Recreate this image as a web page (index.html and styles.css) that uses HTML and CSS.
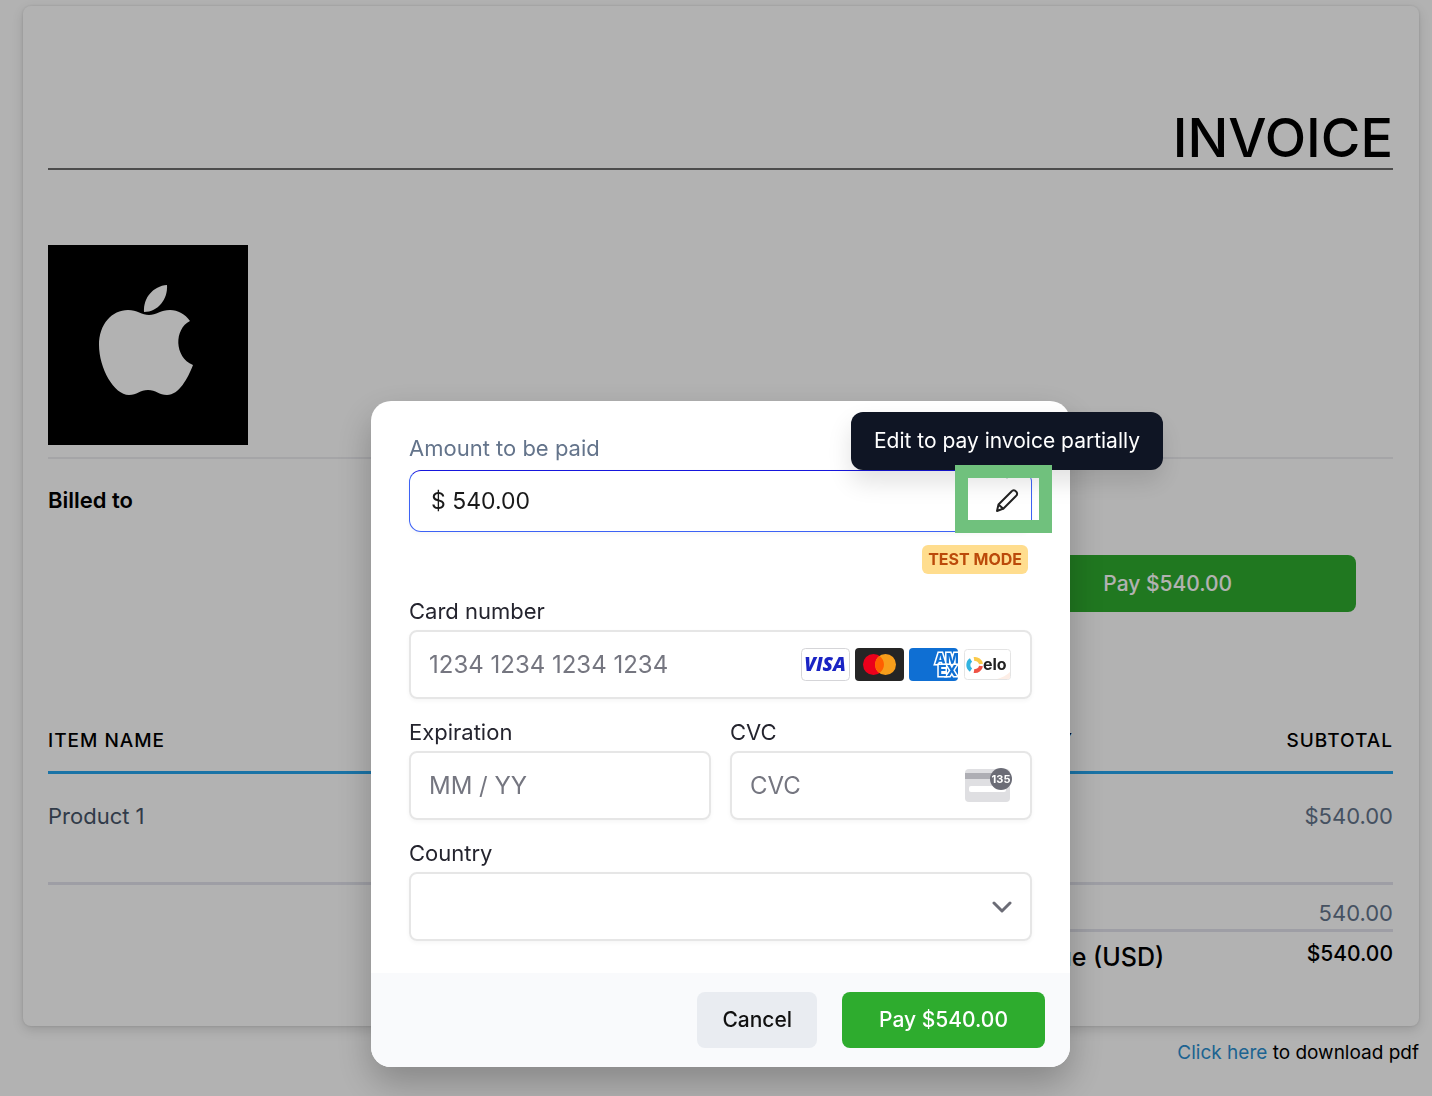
FILE: index.html
```html
<!DOCTYPE html>
<html lang="en">
<head>
  <meta charset="UTF-8">
  <meta name="viewport" content="width=device-width, initial-scale=1.0">
  <title>Invoice</title>
  <link rel="stylesheet" href="styles.css">
</head>
<body>
<div class="page">
  <main class="invoice">
    <h1 class="invoice-title">INVOICE</h1>
    <div class="company">
      <svg class="logo" viewBox="0 0 200 200" role="img" aria-label="Company logo">
        <rect width="200" height="200" fill="#000"/>
        <path fill="#fff" d="M96 67c-1-14 9-26 23-27 1 14-9 27-23 27z"/>
        <path fill="#fff" d="M51 100c0-21 13-35 29-35 9 0 14 5 21 5s12-5 21-5c8 0 15 4 20 11-16 8-16 36 3 44-5 13-14 30-26 30-8 0-11-5-19-5s-11 5-19 5c-15 0-30-27-30-50z"/>
      </svg>
    </div>
    <h2 class="billed">Billed to</h2>
    <button class="btn btn-pay btn-invoice">Pay $540.00</button>
    <table class="items">
      <thead>
        <tr><th class="col-item">ITEM NAME</th><th class="col-qty">QTY</th><th>SUBTOTAL</th></tr>
      </thead>
      <tbody>
        <tr><td class="item-name">Product 1</td><td></td><td>$540.00</td></tr>
      </tbody>
      <tfoot>
        <tr class="sum"><td></td><td></td><td>540.00</td></tr>
        <tr class="due"><td></td><td class="due-label">Amount Due (USD)</td><td>$540.00</td></tr>
      </tfoot>
    </table>
  </main>
  <p class="download"><a href="#">Click here</a> to download pdf</p>
</div>

<div class="overlay">
  <form class="modal" role="dialog" aria-label="Pay invoice">
    <div class="modal-body">
      <label class="amount-label" for="amount">Amount to be paid</label>
      <div class="field amount">
        <input id="amount" type="text" value="$ 540.00">
        <button type="button" class="edit" aria-label="Edit amount">
          <svg viewBox="0 0 24 24" width="24" height="24" fill="none" stroke="#222" stroke-width="2" stroke-linejoin="round" stroke-linecap="round">
            <path d="M2 22l1.500-6.500L16.500 2.500a2.800 2.800 0 0 1 4.500 0a2.800 2.800 0 0 1 0 4.500L8.500 19.500z"/>
            <path d="M4 16l4 3.500"/>
          </svg>
        </button>
        <span class="tooltip" role="tooltip">Edit to pay invoice partially</span>
        <span class="highlight"></span>
      </div>
      <span class="badge">TEST MODE</span>

      <div class="card-form">
        <div class="group wide">
          <label for="card">Card number</label>
          <div class="field">
            <input id="card" type="text" placeholder="1234 1234 1234 1234">
            <div class="brands">
              <svg width="49" height="33" viewBox="0 0 49 33">
                <rect x="0.500" y="0.500" width="48" height="32" rx="4" fill="#fff" stroke="#d5d5d8"/>
                <text x="24" y="23" text-anchor="middle" font-family="Open Sans, sans-serif" font-size="19" font-weight="800" font-style="italic" fill="#1a24c4">VISA</text>
              </svg>
              <svg width="49" height="33" viewBox="0 0 49 33">
                <rect width="49" height="33" rx="4" fill="#252525"/>
                <circle cx="18.500" cy="16.500" r="10.500" fill="#eb001b"/>
                <circle cx="30.500" cy="16.500" r="10.500" fill="#f79e1b"/>
                <path fill="#ff5f00" d="M24.500 7.900a10.500 10.500 0 0 1 0 17.200a10.500 10.500 0 0 1 0-17.200z"/>
              </svg>
              <svg width="49" height="33" viewBox="0 0 49 33">
                <rect width="49" height="33" rx="4" fill="#0f6fd3"/>
                <g font-family="Inter, sans-serif" font-size="14" font-weight="800" fill="#0f6fd3" stroke="#fff" stroke-width="3" paint-order="stroke">
                  <text x="26" y="16">AM</text>
                  <text x="29" y="28">EX</text>
                </g>
              </svg>
              <svg width="49" height="33" viewBox="0 0 49 33">
                <rect x="1.500" y="1.500" width="46" height="30" rx="3" fill="#fff" stroke="#e4e4e4"/>
                <path d="M34 31q8-2 13-7v5q0 2-2 2z" fill="#fdeee6"/>
                <g fill="none" stroke-width="4">
                  <path d="M8 22a6 6 0 0 1 0-10" stroke="#32b4e0"/>
                  <path d="M11 11a6 6 0 0 1 7 5" stroke="#fbca4a"/>
                  <path d="M18 18a6 6 0 0 1-7 5" stroke="#ef5245"/>
                </g>
                <text x="20" y="22" font-family="Inter, sans-serif" font-size="16" font-weight="700" fill="#222">elo</text>
              </svg>
            </div>
          </div>
        </div>
        <div class="group">
          <label for="exp">Expiration</label>
          <div class="field"><input id="exp" type="text" placeholder="MM / YY"></div>
        </div>
        <div class="group">
          <label for="cvc">CVC</label>
          <div class="field">
            <input id="cvc" type="text" placeholder="CVC">
            <svg width="47" height="36" viewBox="0 0 47 36">
              <rect y="1" width="45" height="33" rx="4" fill="#dfdfe2"/>
              <path d="M0 5h45v6H0z" fill="#aeaeb4"/>
              <rect x="4" y="18" width="37" height="6" rx="2" fill="#fff"/>
              <circle cx="36" cy="11" r="11" fill="#6b6c76"/>
              <text x="36" y="15" text-anchor="middle" font-family="Inter, sans-serif" font-size="11" font-weight="700" fill="#fff">135</text>
            </svg>
          </div>
        </div>
        <div class="group wide">
          <label for="country">Country</label>
          <div class="field select">
            <select id="country"><option value=""></option></select>
            <svg class="chevron" width="20" height="12" viewBox="0 0 20 12" fill="none" stroke="#6b6c76" stroke-width="3" stroke-linecap="round" stroke-linejoin="round"><path d="M2 2l8 8 8-8"/></svg>
          </div>
        </div>
      </div>
    </div>
    <div class="modal-footer">
      <button type="button" class="btn btn-cancel">Cancel</button>
      <button type="button" class="btn btn-pay">Pay $540.00</button>
    </div>
  </form>
</div>
</body>
</html>
```
FILE: styles.css
```css
* {
  box-sizing: border-box;
}
body {
  margin: 0;
  background: #fff;
  color: #000;
  font-family: Inter, "Liberation Sans", sans-serif;
  font-size: 22px;
  line-height: 28px;
}
input, select, button {
  font: inherit;
  color: inherit;
}
.page {
  padding: 6px 13px 0 23px;
}

/* Invoice */
.invoice {
  padding: 0 26px 52px 25px;
  border-radius: 8px;
  box-shadow: 0 0 2px 1px rgba(0,0,0,0.06), 0 4px 12px rgba(0,0,0,0.14);
}
.invoice-title {
  margin: 0;
  padding-top: 102px;
  border-bottom: 2px solid #6e6e6e;
  font-size: 54px;
  font-weight: 500;
  line-height: 60px;
  text-align: right;
}
.company {
  padding: 75px 0 12px;
  border-bottom: 2px solid #ececf0;
}
.logo {
  display: block;
  width: 200px;
  height: 200px;
}
.billed {
  margin: 27px 0 41px;
  font-size: 22px;
  font-weight: 600;
}
.btn {
  height: 56px;
  border: none;
  border-radius: 8px;
  font-size: 21px;
  font-weight: 500;
  cursor: pointer;
}
.btn-pay {
  background: #2eac2e;
  color: #fff;
  padding: 0 37px;
}
.btn-invoice {
  display: block;
  width: 28%;
  height: 57px;
  margin: 0 37px 88px auto;
}
.items {
  width: 100%;
  table-layout: fixed;
  border-collapse: separate;
  border-spacing: 0;
}
.items th {
  padding: 29px 0 18px;
  border-bottom: 3px solid #26a5ee;
  font-size: 19px;
  font-weight: 500;
  line-height: 24px;
  letter-spacing: 1px;
  text-align: right;
}
.items .col-item {
  width: 66.2%;
  text-align: left;
}
.items .col-qty {
  width: 10%;
}
.items td {
  padding: 0;
  vertical-align: top;
  text-align: right;
  color: #64748b;
}
.items tbody td {
  padding: 28px 0 52px;
  border-bottom: 3px solid #e2e3ec;
}
.items .item-name {
  text-align: left;
  color: #475569;
}
.sum td {
  padding: 14px 0 2px;
}
.sum td + td {
  border-bottom: 3px solid #e2e3ec;
}
.items .due td {
  padding-top: 8px;
  color: #000;
  font-size: 21px;
  font-weight: 500;
}
.items .due .due-label {
  font-size: 25px;
  line-height: 34px;
  text-align: left;
  white-space: nowrap;
}
.download {
  margin: 13px 0 0;
  text-align: right;
  font-size: 19px;
}
.download a {
  color: #2b8fd0;
  text-decoration: none;
}

/* Payment modal */
.overlay {
  position: fixed;
  inset: 0;
  display: flex;
  align-items: flex-end;
  justify-content: center;
  padding: 0 0 29px 9px;
  background: rgba(0,0,0,0.3);
}
.modal {
  width: 699px;
  max-width: 100%;
  border-radius: 20px;
  background: #fff;
  box-shadow: 0 16px 36px rgba(0,0,0,0.25);
}
.modal-body {
  display: flex;
  flex-direction: column;
  padding: 33px 38px 32px;
}
.amount-label {
  margin-bottom: 8px;
  color: #64748b;
}
.field {
  display: flex;
  align-items: center;
  height: 69px;
  padding: 0 18px;
  border: 2px solid #e6e6e6;
  border-radius: 8px;
  box-shadow: 0 2px 4px rgba(0,0,0,0.04);
}
.field input,
.field select {
  flex: 1;
  min-width: 0;
  padding: 0;
  border: none;
  outline: none;
  background: none;
  font-size: 24px;
}
.field input::placeholder {
  color: #757680;
}
.amount {
  position: relative;
  height: 62px;
  padding: 0 12px 0 21px;
  border: 1px solid #3d62f5;
  border-top-color: #1616dd;
  border-radius: 12px;
}
.amount input {
  font-size: 23px;
  color: #1a1a1a;
}
.edit {
  display: flex;
  padding: 0;
  border: none;
  background: none;
  cursor: pointer;
}
.tooltip {
  position: absolute;
  right: -132px;
  bottom: 61px;
  padding: 15px 23px;
  border-radius: 12px;
  background: #0f1524;
  color: #fff;
  box-shadow: 0 12px 24px rgba(0,0,0,0.12);
  font-size: 21px;
  white-space: nowrap;
}
.tooltip::after {
  content: "";
  position: absolute;
  left: 50%;
  bottom: -6px;
  width: 12px;
  height: 12px;
  margin-left: -6px;
  background: #0f1524;
  transform: rotate(45deg);
}
.highlight {
  position: absolute;
  top: -6px;
  right: -21px;
  width: 97px;
  height: 68px;
  border: 13px solid #70c17d;
}
.badge {
  align-self: flex-end;
  margin: 13px 4px 23px 0;
  padding: 0 6px;
  border-radius: 6px;
  background: #ffdd8e;
  color: #bb4a0a;
  font-size: 16px;
  font-weight: 700;
  line-height: 29px;
}
.card-form {
  display: grid;
  grid-template-columns: repeat(2, minmax(0, 1fr));
  gap: 19px;
  color: #24242e;
}
.group {
  display: flex;
  flex-direction: column;
  gap: 5px;
}
.wide {
  grid-column: 1 / -1;
}
.brands {
  display: flex;
  gap: 5px;
}
.select {
  position: relative;
}
.field select {
  align-self: stretch;
  appearance: none;
}
.chevron {
  position: absolute;
  right: 18px;
  pointer-events: none;
}
.modal-footer {
  display: flex;
  justify-content: flex-end;
  gap: 25px;
  padding: 19px 25px;
  border-radius: 0 0 20px 20px;
  background: #f9fafc;
}
.btn-cancel {
  padding: 0 25px;
  background: #e9ecf1;
  color: #111;
}
```
